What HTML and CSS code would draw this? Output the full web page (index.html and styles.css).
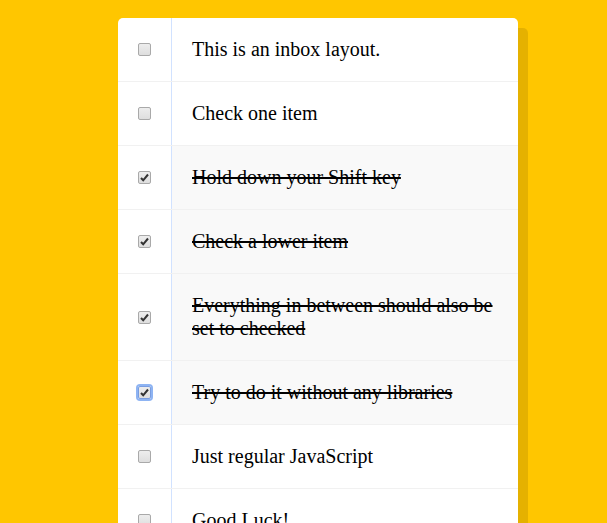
FILE: index.html
```html
<!DOCTYPE html>
<html>
<head>
<meta charset="utf-8">
<link rel="stylesheet" href="styles.css">
</head>
<body>
<div class="inbox">
  <div class="item"><input type="checkbox" class="cb"><p class="label">This is an inbox layout.</p></div>
  <div class="item"><input type="checkbox" class="cb"><p class="label">Check one item</p></div>
  <div class="item"><input type="checkbox" class="cb" checked><p class="label">Hold down your Shift key</p></div>
  <div class="item"><input type="checkbox" class="cb" checked><p class="label">Check a lower item</p></div>
  <div class="item"><input type="checkbox" class="cb" checked><p class="label">Everything in between should also be set to checked</p></div>
  <div class="item"><input type="checkbox" class="cb cb-focus" checked><p class="label">Try to do it without any libraries</p></div>
  <div class="item"><input type="checkbox" class="cb"><p class="label">Just regular JavaScript</p></div>
  <div class="item"><input type="checkbox" class="cb"><p class="label">Good Luck!</p></div>
  <div class="item"><input type="checkbox" class="cb"><p class="label">Don't forget to tweet your result!</p></div>
</div>
</body>
</html>
```
FILE: styles.css
```css
html {
  background: #ffc600;
}
body {
  margin: 0;
  padding: 18px 0 40px 118px;
  font-family: "Liberation Serif", serif;
}
.inbox {
  width: 400px;
  background: #fff;
  border-radius: 5px;
  box-shadow: 10px 10px 0 rgba(0, 0, 0, 0.1);
}
.item {
  display: flex;
  align-items: center;
  border-bottom: 1px solid #f1f1f1;
}
.item:last-child {
  border-bottom: 0;
}
.cb {
  -webkit-appearance: none;
  appearance: none;
  width: 13px;
  height: 13px;
  margin: 20px;
  box-sizing: border-box;
  border: 1px solid #a9a9a9;
  border-radius: 2px;
  background: linear-gradient(#ededed, #dedede);
  flex: none;
}
.cb:checked {
  background-image: url("data:image/svg+xml,%3Csvg xmlns='http://www.w3.org/2000/svg' width='11' height='11' viewBox='0 0 11 11'%3E%3Cpath d='M2 6 L4.2 8.3 L9 2.5' fill='none' stroke='%23333' stroke-width='2'/%3E%3C/svg%3E"), linear-gradient(#ededed, #dedede);
  background-repeat: no-repeat;
  background-position: center;
}
.cb-focus {
  box-shadow: 0 0 0 2px #8eb4f3;
  border-color: #7a9de0;
}
.label {
  margin: 0;
  padding: 20px;
  flex: 1;
  font-size: 20px;
  line-height: 23px;
  color: #000;
  border-left: 1px solid #d1e2ff;
}
.cb:checked + .label {
  background: #f9f9f9;
  text-decoration: line-through;
}
```
